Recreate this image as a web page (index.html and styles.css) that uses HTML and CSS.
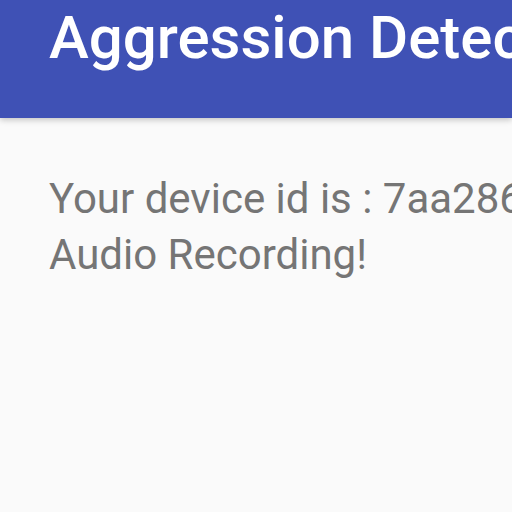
FILE: index.html
```html
<!DOCTYPE html>
<html lang="en">
<head>
  <meta charset="UTF-8" />
  <title>Aggression Detection</title>
  <link rel="stylesheet" href="styles.css">
</head>
<body>
  <header class="appbar">
    <h1 class="title">Aggression Detection</h1>
  </header>

  <main class="content">
    <p class="line">Your device id is : 7aa2864f1c0b9e3d</p>
    <p class="line">Audio Recording!</p>
  </main>
</body>
</html>
```
FILE: styles.css
```css
html,body{margin:0;padding:0;height:100%;overflow:hidden}
body{font-family:Roboto,"Noto Sans",Arial,sans-serif;background:#fafafa}
.appbar{position:relative;height:118px;background:#3f51b5;box-shadow:0 2px 6px rgba(0,0,0,.22);padding-left:49px;white-space:nowrap;overflow:hidden}
.title{margin:0;color:#fff;font-size:60px;font-weight:500;line-height:76px;letter-spacing:0}
.content{padding:53px 0 0 49px;white-space:nowrap}
.line{margin:0;color:#757575;font-size:42px;line-height:56px}
```
